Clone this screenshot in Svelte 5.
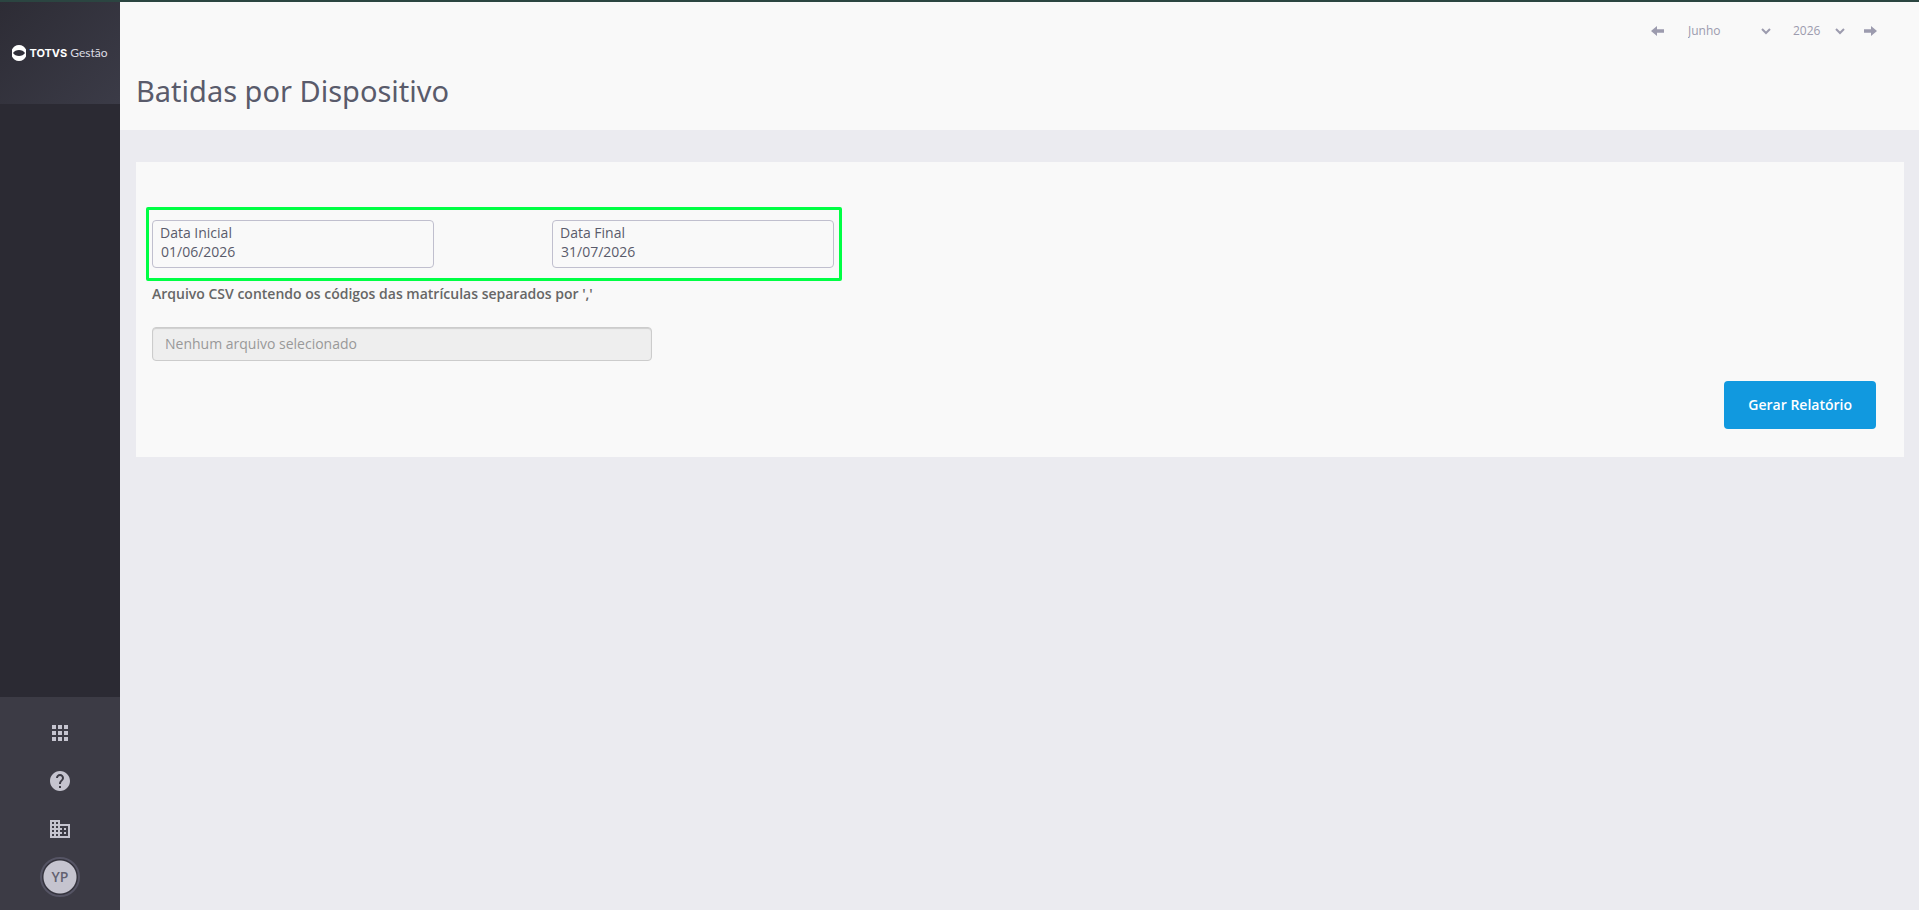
<script>
  const months = ['Janeiro', 'Fevereiro', 'Março', 'Abril', 'Maio', 'Junho', 'Julho', 'Agosto', 'Setembro', 'Outubro', 'Novembro', 'Dezembro'];
  const years = [2024, 2025, 2026, 2027];

  let month = $state(5);
  let year = $state(2026);
  let start = $state('01/06/2026');
  let end = $state('31/07/2026');

  function step(delta) {
    const next = month + delta;
    if (next < 0 && year > years[0]) {
      month = 11;
      year -= 1;
    } else if (next > 11 && year < years[years.length - 1]) {
      month = 0;
      year += 1;
    } else if (next >= 0 && next <= 11) {
      month = next;
    }
  }
</script>

{#snippet chevron()}
  <svg class="chevron" width="10" height="7" viewBox="0 0 10 7" aria-hidden="true">
    <path d="M1 1l4 4 4-4" fill="none" stroke="currentColor" stroke-width="2" />
  </svg>
{/snippet}

<div class="app">
  <aside class="sidebar">
    <a class="brand" href="#inicio">
      <svg width="14" height="16" viewBox="0 0 14 16" aria-hidden="true">
        <path fill="#fff" fill-rule="evenodd" d="M0 4.500C1.200 1.800 3.800 0 7 0s5.800 1.800 7 4.500v7c-1.200 2.700-3.800 4.500-7 4.500s-5.800-1.800-7-4.500zM1 8c1.300 2 3.400 3 6 3s4.700-1 6-3c-1.300-2-3.400-3-6-3S2.300 6 1 8z" />
      </svg>
      <span class="brand-name">TOTVS</span>
      <span class="brand-product">Gestão</span>
    </a>

    <nav class="tools" aria-label="Ferramentas">
      <button class="tool" type="button" aria-label="Aplicativos">
        <svg width="24" height="24" viewBox="0 0 24 24"><path fill="currentColor" d="M4 8h4V4H4v4zm6 12h4v-4h-4v4zm-6 0h4v-4H4v4zm0-6h4v-4H4v4zm6 0h4v-4h-4v4zm6-10v4h4V4h-4zm-6 4h4V4h-4v4zm6 6h4v-4h-4v4zm0 6h4v-4h-4v4z" /></svg>
      </button>
      <button class="tool" type="button" aria-label="Ajuda">
        <svg width="24" height="24" viewBox="0 0 24 24"><path fill="currentColor" fill-rule="evenodd" d="M12 2C6.480 2 2 6.480 2 12s4.480 10 10 10 10-4.480 10-10S17.520 2 12 2zm1 17h-2v-2h2v2zm2.070-7.750l-.9.920C13.450 12.900 13 13.500 13 15h-2v-.5c0-1.100.45-2.100 1.170-2.830l1.240-1.260c.37-.36.59-.86.59-1.410 0-1.100-.9-2-2-2s-2 .9-2 2H8c0-2.210 1.790-4 4-4s4 1.790 4 4c0 .88-.36 1.680-.93 2.250z" /></svg>
      </button>
      <button class="tool" type="button" aria-label="Empresa">
        <svg width="24" height="24" viewBox="0 0 24 24"><path fill="currentColor" d="M12 7V3H2v18h20V7H12zM6 19H4v-2h2v2zm0-4H4v-2h2v2zm0-4H4V9h2v2zm0-4H4V5h2v2zm4 12H8v-2h2v2zm0-4H8v-2h2v2zm0-4H8V9h2v2zm0-4H8V5h2v2zm10 12h-8v-2h2v-2h-2v-2h2v-2h-2V9h8v10zm-2-8h-2v2h2v-2zm0 4h-2v2h2v-2z" /></svg>
      </button>
      <button class="tool" type="button" aria-label="Perfil">
        <span class="avatar">YP</span>
      </button>
    </nav>
  </aside>

  <div class="page">
    <header>
      <div class="period">
        <button class="arrow" type="button" aria-label="Mês anterior" onclick={() => step(-1)}>
          <svg width="13" height="10" viewBox="0 0 13 10"><path fill="currentColor" d="M0 5l6-5v3.300h7v3.400H6V10z" /></svg>
        </button>
        <div class="select month">
          <select aria-label="Mês" bind:value={month}>
            {#each months as name, i}<option value={i}>{name}</option>{/each}
          </select>
          {@render chevron()}
        </div>
        <div class="select year">
          <select aria-label="Ano" bind:value={year}>
            {#each years as y}<option value={y}>{y}</option>{/each}
          </select>
          {@render chevron()}
        </div>
        <button class="arrow" type="button" aria-label="Próximo mês" onclick={() => step(1)}>
          <svg width="13" height="10" viewBox="0 0 13 10"><path fill="currentColor" d="M13 5L7 0v3.300H0v3.400h7V10z" /></svg>
        </button>
      </div>
      <h1>Batidas por Dispositivo</h1>
    </header>

    <main>
      <form class="card" onsubmit={(e) => e.preventDefault()}>
        <div class="dates">
          <div class="field">
            <label for="start">Data Inicial</label>
            <input id="start" type="text" bind:value={start} />
          </div>
          <div class="field">
            <label for="end">Data Final</label>
            <input id="end" type="text" bind:value={end} />
          </div>
        </div>
        <div class="file">
          <label for="file">Arquivo CSV contendo os códigos das matrículas separados por ','</label>
          <input id="file" type="text" placeholder="Nenhum arquivo selecionado" readonly />
        </div>
        <button class="submit" type="submit">Gerar Relatório</button>
      </form>
    </main>
  </div>
</div>

<style>
  :global(body) {
    background: #ebebf0;
  }

  .app {
    display: flex;
    box-sizing: border-box;
    min-height: 100vh;
    border-top: 2px solid #2b4541;
    font-family: 'Open Sans', sans-serif;
    font-size: 14px;
    line-height: 20px;
    color: #595b6b;
  }

  button,
  input,
  select {
    font: inherit;
    color: inherit;
    border: 0;
    padding: 0;
    margin: 0;
    background: none;
  }

  button {
    cursor: pointer;
  }

  .sidebar {
    display: flex;
    flex-direction: column;
    flex: none;
    width: 120px;
    background: #2b2a33;
  }

  .brand {
    display: flex;
    align-items: center;
    justify-content: center;
    height: 102px;
    background: linear-gradient(135deg, #2d2c35, #3b3b47);
    color: #fff;
    text-decoration: none;
  }

  .brand-name {
    margin: 0 3px;
    font: 700 11px/16px Inter, sans-serif;
  }

  .brand-product {
    font: 400 12px/16px Lato, sans-serif;
    color: #dcdce2;
  }

  .tools {
    display: flex;
    flex-direction: column;
    margin-top: auto;
    padding: 12px 0 9px;
    background: #3c3b45;
    color: #c5c4cf;
  }

  .tool {
    display: flex;
    align-items: center;
    justify-content: center;
    height: 48px;
  }

  .avatar {
    box-sizing: border-box;
    width: 40px;
    height: 40px;
    border: 2px solid #555464;
    border-radius: 50%;
    background: radial-gradient(circle, #c5c4cf 16px, #34333d 17px);
    color: #62616f;
    font-weight: 600;
    line-height: 36px;
    text-align: center;
  }

  .page {
    flex: 1;
    min-width: 0;
  }

  header {
    padding: 18px 42px 19px 16px;
    background: #f9f9f9;
  }

  .period {
    display: flex;
    justify-content: flex-end;
    align-items: center;
    height: 22px;
    font-size: 12px;
    color: #9c9bae;
  }

  .arrow {
    display: flex;
  }

  .select {
    display: grid;
    align-items: center;
  }

  .select > :global(*) {
    grid-area: 1 / 1;
  }

  .select select {
    appearance: none;
    width: 100%;
    cursor: pointer;
    outline: none;
  }

  .chevron {
    justify-self: end;
    pointer-events: none;
  }

  .month {
    width: 83px;
    margin: 0 22px 0 24px;
  }

  .year {
    width: 52px;
    margin-right: 19px;
  }

  h1 {
    margin: 29px 0 0;
    font: 400 29px/40px 'Noto Sans', sans-serif;
  }

  main {
    padding: 32px 15px 32px 16px;
  }

  .card {
    display: flex;
    flex-direction: column;
    align-items: flex-start;
    padding: 45px 28px 28px 10px;
    background: #f9f9f9;
  }

  .dates {
    display: flex;
    gap: 118px;
    padding: 10px 5px 10px 3px;
    border: 3px solid #00ff44;
    border-radius: 2px;
  }

  .field {
    display: flex;
    flex-direction: column;
    box-sizing: border-box;
    width: 282px;
    height: 48px;
    padding: 2px 7px;
    border: 1px solid #c0bfce;
    border-radius: 4px;
  }

  .field input {
    height: 18px;
    line-height: 18px;
    padding-left: 1px;
    outline: none;
  }

  .file {
    display: flex;
    flex-direction: column;
    gap: 23px;
    margin: 3px 0 20px 6px;
  }

  .file label {
    font-weight: 600;
    color: #666;
  }

  .file input {
    box-sizing: border-box;
    width: 500px;
    height: 34px;
    padding: 0 12px 2px;
    border: 1px solid #ccc;
    border-radius: 4px;
    background: #eee;
    box-shadow: inset 0 1px 1px #0002;
  }

  .file input::placeholder {
    color: #999;
    opacity: 1;
  }

  .submit {
    align-self: flex-end;
    height: 48px;
    padding: 0 24px;
    border-radius: 4px;
    background: #1199df;
    color: #fff;
    font-weight: 600;
  }
</style>
